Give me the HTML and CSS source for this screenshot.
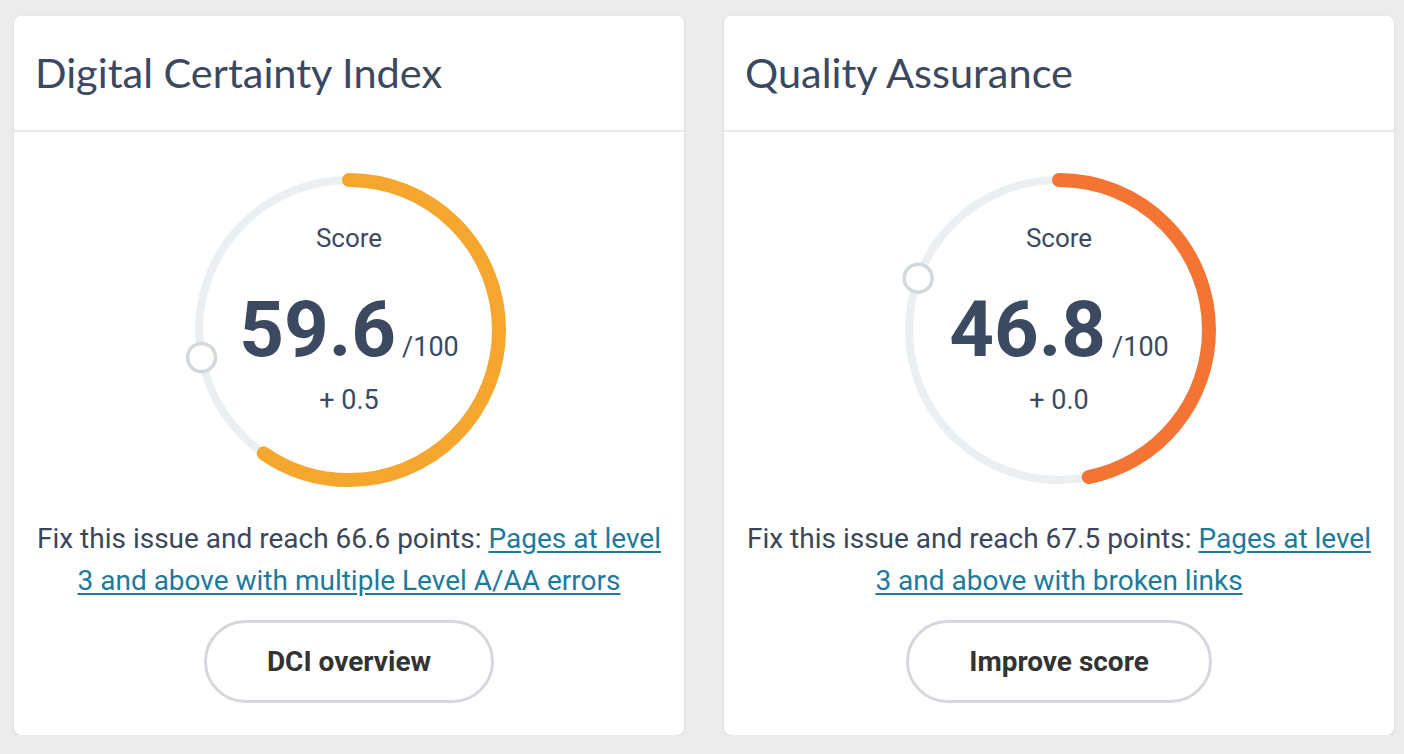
FILE: index.html
```html
<!DOCTYPE html>
<html lang="en">
<head>
<meta charset="utf-8">
<title>Scores</title>
<link rel="stylesheet" href="styles.css">
</head>
<body>
<div class="page">
  <section class="card">
    <header class="card-head"><h2 class="card-title">Digital Certainty Index</h2></header>
    <div class="card-body">
      <div class="gauge">
        <svg class="gauge-svg" width="330" height="330" viewBox="0 0 330 330">
          <circle class="track" cx="165" cy="165" r="150"/>
          <circle class="arc arc-yellow" cx="165" cy="165" r="150" stroke-dasharray="561.7 1000" transform="rotate(-90 165 165)"/>
          <circle class="knob" cx="17.5" cy="192.5" r="14"/>
        </svg>
        <div class="gauge-text">
          <div class="g-label">Score</div>
          <div class="g-value"><span class="g-num">59.6</span><span class="g-max">/100</span></div>
          <div class="g-delta">+ 0.5</div>
        </div>
      </div>
      <p class="hint">Fix this issue and reach 66.6 points: <a class="hint-link" href="#">Pages at level 3 and above with multiple Level A/AA errors</a></p>
      <button class="btn" type="button">DCI overview</button>
    </div>
  </section>
  <section class="card">
    <header class="card-head"><h2 class="card-title">Quality Assurance</h2></header>
    <div class="card-body">
      <div class="gauge">
        <svg class="gauge-svg" width="330" height="330" viewBox="0 0 330 330">
          <circle class="track" cx="165" cy="165" r="150"/>
          <circle class="arc arc-orange" cx="165" cy="165" r="150" stroke-dasharray="441.1 1000" transform="rotate(-90 165 165)"/>
          <circle class="knob" cx="24.2" cy="113.2" r="14"/>
        </svg>
        <div class="gauge-text">
          <div class="g-label">Score</div>
          <div class="g-value"><span class="g-num">46.8</span><span class="g-max">/100</span></div>
          <div class="g-delta">+ 0.0</div>
        </div>
      </div>
      <p class="hint">Fix this issue and reach 67.5 points: <a class="hint-link" href="#">Pages at level 3 and above with broken links</a></p>
      <button class="btn" type="button">Improve score</button>
    </div>
  </section>
</div>
</body>
</html>
```

FILE: styles.css
```css
* { box-sizing: border-box; }

html, body {
  margin: 0;
  padding: 0;
  background: #ececec;
  font-family: Roboto, "Liberation Sans", sans-serif;
  color: #3b4759;
}

.page {
  display: grid;
  grid-template-columns: 670px 670px;
  column-gap: 40px;
  padding: 16px 0 0 14px;
}

.card {
  height: 719px;
  background: #fff;
  border-radius: 7px;
  box-shadow: 0 1px 3px rgba(0, 0, 0, 0.13);
  display: flex;
  flex-direction: column;
}

.card-head {
  height: 116px;
  border-bottom: 2px solid #e8ebed;
  padding: 32px 21px 0;
}

.card-title {
  margin: 0;
  font-family: Lato, "Noto Sans", sans-serif;
  font-weight: 400;
  font-size: 41.5px;
  line-height: 48px;
  color: #3a4860;
}

.card-body {
  display: flex;
  flex-direction: column;
  align-items: center;
  padding: 33px 17px 32px;
}

.gauge {
  display: grid;
  width: 330px;
  height: 330px;
}

.gauge-svg,
.gauge-text {
  grid-area: 1 / 1;
}

.track {
  fill: none;
  stroke: #eceff1;
  stroke-width: 8;
}

.arc {
  fill: none;
  stroke-width: 14;
  stroke-linecap: round;
}

.arc-yellow { stroke: #f5a62e; }
.arc-orange { stroke: #f47433; }

.knob {
  fill: #fff;
  stroke: #d3d8dc;
  stroke-width: 3.5;
}

.gauge-text {
  display: flex;
  flex-direction: column;
  align-items: center;
  padding-top: 58px;
  color: #3b4a60;
}

.g-label {
  font-size: 26px;
  line-height: 30px;
}

.g-value {
  margin-top: 37px;
  display: flex;
  align-items: baseline;
  gap: 6px;
}

.g-num {
  font-size: 78px;
  line-height: 80px;
  font-weight: 700;
}

.g-max {
  font-size: 27px;
  line-height: 30px;
}

.g-delta {
  margin-top: 15px;
  font-size: 27px;
  line-height: 30px;
}

.hint {
  margin: 23px 0 0;
  text-align: center;
  font-size: 28px;
  line-height: 42px;
  color: #3b4759;
}

.hint-link {
  color: #1d7a9b;
  text-decoration: underline;
  text-underline-offset: 3px;
}

.btn {
  margin-top: 18px;
  height: 83px;
  padding: 0 60px;
  border: 3px solid #d4d8dc;
  border-radius: 42px;
  background: #fff;
  font-family: Roboto, "Liberation Sans", sans-serif;
  font-size: 28px;
  font-weight: 700;
  color: #333;
}
```
